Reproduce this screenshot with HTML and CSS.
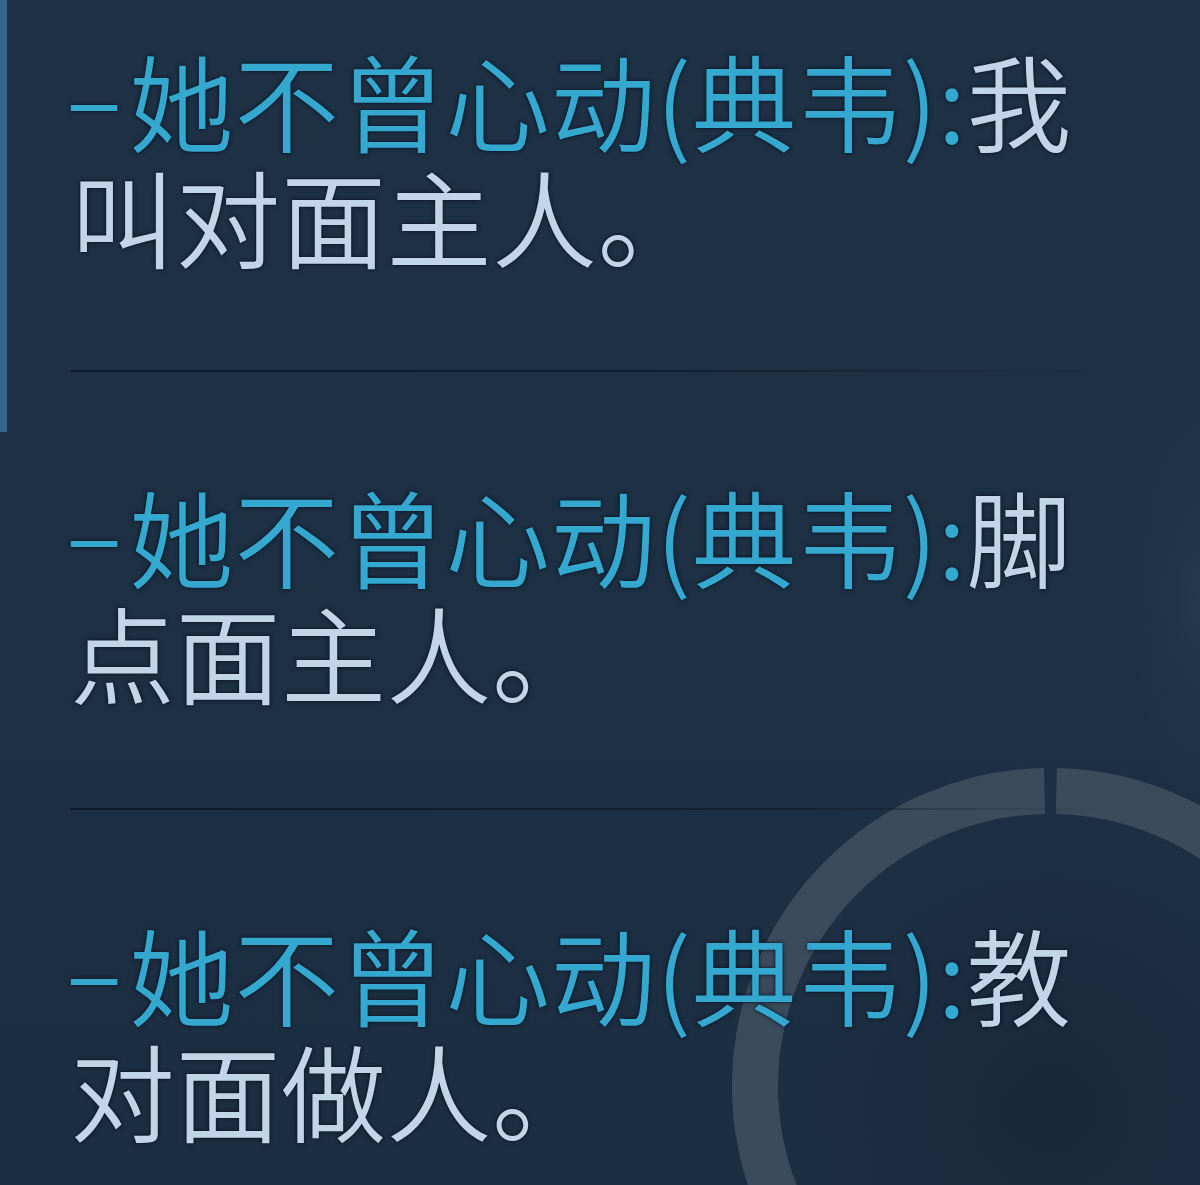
FILE: index.html
```html
<!DOCTYPE html>
<html lang="zh-CN">
<head>
<meta charset="utf-8">
<title>聊天记录</title>
<link rel="stylesheet" href="styles.css">
</head>
<body>
<div class="panel">
  <div class="scroll-thumb"></div>
  <svg class="skill-ring" width="700" height="700" viewBox="0 0 700 700" aria-hidden="true">
    <circle cx="350" cy="350" r="295" fill="none" stroke="#3a4c5c" stroke-width="46" stroke-dasharray="1841 12" stroke-dashoffset="457"/>
  </svg>
  <ul class="chat">
    <li class="msg">
      <p class="line"><span class="name"><span class="dash">–</span>她不曾心动(典韦):</span><span class="text">我</span><br><span class="text">叫对面主人。</span></p>
    </li>
    <li class="msg">
      <p class="line"><span class="name"><span class="dash">–</span>她不曾心动(典韦):</span><span class="text">脚</span><br><span class="text">点面主人。</span></p>
    </li>
    <li class="msg">
      <p class="line"><span class="name"><span class="dash">–</span>她不曾心动(典韦):</span><span class="text">教</span><br><span class="text">对面做人。</span></p>
    </li>
  </ul>
</div>
</body>
</html>
```

FILE: styles.css
```css
html, body {
  margin: 0;
  padding: 0;
}

body {
  width: 1200px;
  height: 1185px;
  overflow: hidden;
  background: #1d2f43;
  font-family: "Noto Sans CJK SC", "Noto Sans", sans-serif;
}

.panel {
  position: relative;
  width: 1200px;
  height: 1185px;
  overflow: hidden;
  background:
    radial-gradient(ellipse 70px 200px at 1200px 600px, rgba(60, 88, 112, 0.22), rgba(60, 88, 112, 0) 100%),
    radial-gradient(circle 240px at 1050px 1100px, rgba(14, 26, 42, 0.3), rgba(14, 26, 42, 0) 100%),
    linear-gradient(180deg, #1e3145 0%, #1d3044 50%, #1c2e42 100%);
}

/* scrollbar thumb along the left edge */
.scroll-thumb {
  position: absolute;
  left: 0;
  top: 0;
  width: 7px;
  height: 432px;
  background: #36688f;
}

/* cooldown ring of the skill button behind the chat */
.skill-ring {
  position: absolute;
  left: 700px;
  top: 736px;
}

.chat {
  position: relative;
  list-style: none;
  margin: 0;
  padding: 40px 0 0 70px;
}

.msg {
  position: relative;
  width: 1010px;
  margin-bottom: 104px;
  padding-bottom: 102px;
}

.msg:first-child {
  padding-bottom: 100px;
}

.msg::after {
  content: "";
  position: absolute;
  left: 0;
  bottom: 0;
  width: 1040px;
  height: 2px;
  background: linear-gradient(90deg, rgba(14, 26, 40, 0.9) 0%, rgba(14, 26, 40, 0.8) 55%, rgba(14, 26, 40, 0) 100%);
}

.msg:last-child::after {
  display: none;
}

.line {
  margin: 0;
  font-size: 105px;
  line-height: 116px;
  font-weight: 350;
  letter-spacing: 0.5px;
  white-space: nowrap;
  text-shadow: 0 0 4px rgba(6, 16, 30, 0.9), 0 0 1px rgba(6, 16, 30, 0.9);
}

/* inline-blocks keep each run's box to the 116px line */
.name,
.text {
  display: inline-block;
}

.name {
  color: #34a8cf;
}

.text {
  color: #c2d4e8;
}

.dash {
  display: inline-block;
  transform: translateY(-7px);
  margin-left: -4px;
  margin-right: 6px;
}
```
